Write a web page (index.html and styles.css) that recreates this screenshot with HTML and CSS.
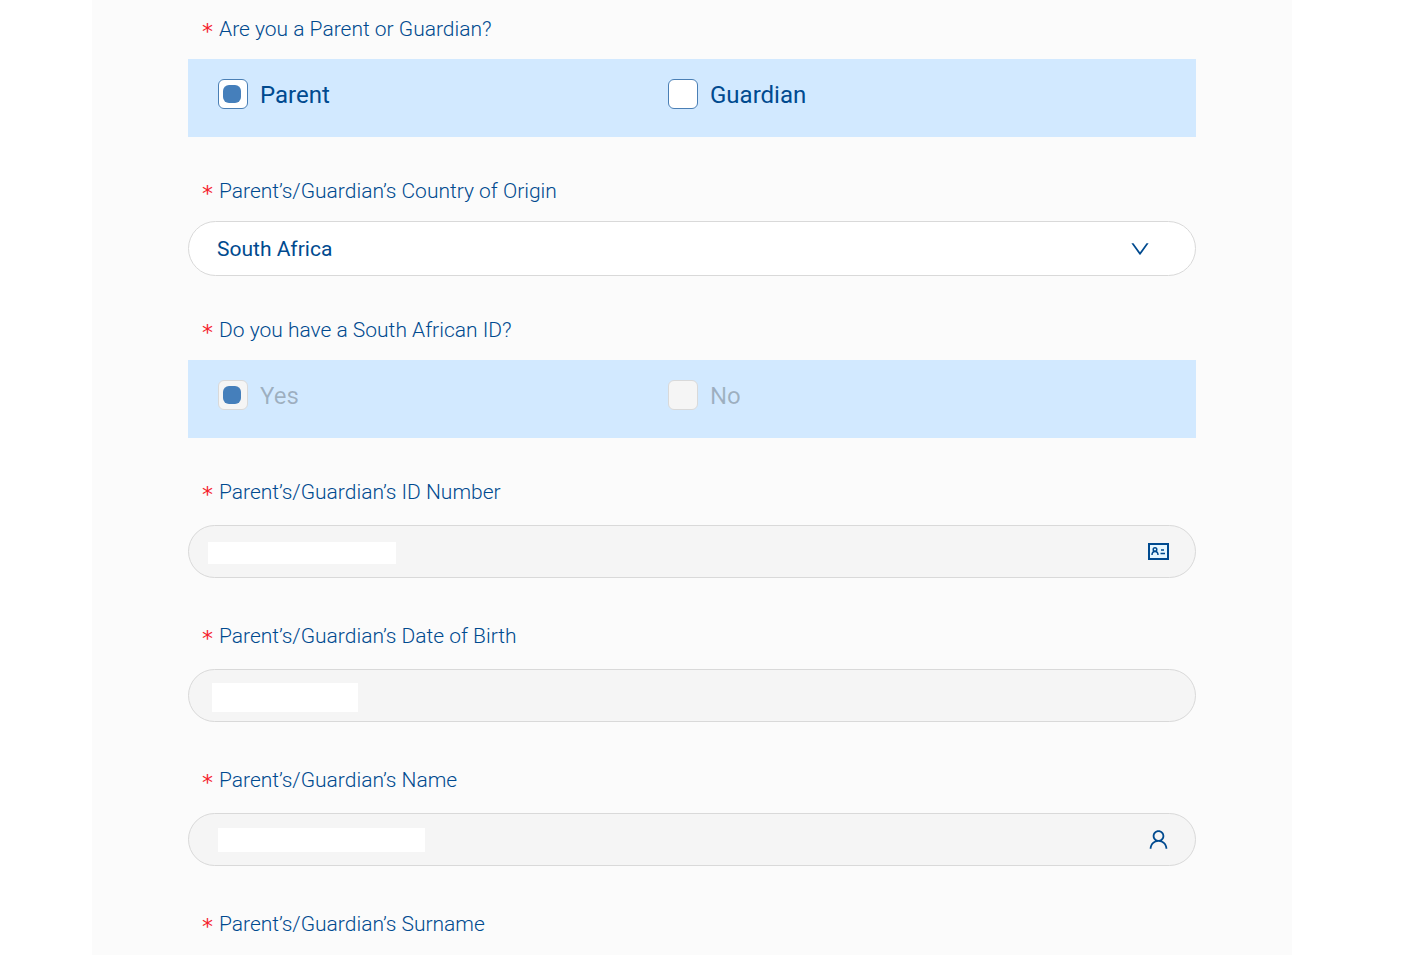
FILE: index.html
```html
<!DOCTYPE html>
<html lang="en">

<head>
    <meta charset="UTF-8">
    <meta name="viewport" content="width=device-width, initial-scale=1.0">
    <title>Parent / Guardian Details</title>
    <link rel="stylesheet" href="styles.css">
</head>

<body>
    <main class="page">
        <form class="form">
            <fieldset class="form-item">
                <legend class="form-label">Are you a Parent or Guardian?</legend>
                <div class="choices">
                    <label class="choice">
                        <input type="radio" name="relation" value="parent" checked>
                        <span>Parent</span>
                    </label>
                    <label class="choice">
                        <input type="radio" name="relation" value="guardian">
                        <span>Guardian</span>
                    </label>
                </div>
            </fieldset>

            <div class="form-item">
                <label class="form-label" for="country">Parent’s/Guardian’s Country of Origin</label>
                <div class="select-box">
                    <select id="country" name="country">
                        <option selected>South Africa</option>
                    </select>
                    <svg class="arrow" viewBox="64 64 896 896" aria-hidden="true">
                        <path d="M884 256h-75c-5.100 0-9.900 2.500-12.900 6.600L512 654.200 227.900 262.600c-3-4.100-7.800-6.600-12.900-6.600h-75c-6.500 0-10.300 7.400-6.500 12.700l352.600 486.100c12.800 17.600 39 17.600 51.700 0l352.600-486.100c3.900-5.300.1-12.700-6.400-12.700z" />
                    </svg>
                </div>
            </div>

            <fieldset class="form-item">
                <legend class="form-label">Do you have a South African ID?</legend>
                <div class="choices">
                    <label class="choice disabled">
                        <input type="radio" name="has-id" value="yes" checked disabled>
                        <span>Yes</span>
                    </label>
                    <label class="choice disabled">
                        <input type="radio" name="has-id" value="no" disabled>
                        <span>No</span>
                    </label>
                </div>
            </fieldset>

            <div class="form-item text-item">
                <label class="form-label" for="id-number">Parent’s/Guardian’s ID Number</label>
                <div class="text-box">
                    <input type="text" id="id-number" name="id-number" disabled>
                    <span class="mask mask-id"></span>
                    <svg class="icon" viewBox="0 0 21 21" aria-hidden="true">
                        <rect class="card" x="1" y="3" width="19" height="15" />
                        <circle class="line" cx="7" cy="8.5" r="1.8" />
                        <path class="line" d="M4 14c0-2.300 1.200-3.500 3-3.500s3 1.200 3 3.500M13 9h3M12.500 12.500h4.500" />
                    </svg>
                </div>
            </div>

            <div class="form-item text-item">
                <label class="form-label" for="birth-date">Parent’s/Guardian’s Date of Birth</label>
                <div class="text-box">
                    <input type="text" id="birth-date" name="birth-date" disabled>
                    <span class="mask mask-date"></span>
                </div>
            </div>

            <div class="form-item text-item">
                <label class="form-label" for="first-name">Parent’s/Guardian’s Name</label>
                <div class="text-box">
                    <input type="text" id="first-name" name="first-name" disabled>
                    <span class="mask mask-name"></span>
                    <svg class="icon" viewBox="64 64 896 896" aria-hidden="true">
                        <path d="M858.500 763.600a374 374 0 00-80.600-119.500 375.630 375.630 0 00-119.500-80.600c-.4-.2-.8-.3-1.200-.5C719.500 518 760 444.700 760 362c0-137-111-248-248-248S264 225 264 362c0 82.700 40.500 156 102.800 201.100-.4.2-.8.3-1.200.5-44.800 18.900-85 46-119.500 80.600a375.630 375.630 0 00-80.600 119.500A371.700 371.700 0 00136 901.800a8 8 0 008 8.200h60c4.400 0 7.900-3.500 8-7.800 2-77.200 33-149.500 87.800-204.300 56.700-56.700 132-87.900 212.200-87.900s155.500 31.200 212.200 87.900C779 752.700 810 825 812 902.200c.1 4.400 3.600 7.800 8 7.800h60a8 8 0 008-8.200c-1-47.800-10.900-94.300-29.500-138.200zM512 534c-45.900 0-89.100-17.900-121.600-50.400S340 407.900 340 362c0-45.900 17.900-89.100 50.400-121.600S466.100 190 512 190s89.100 17.900 121.600 50.400S684 316.100 684 362c0 45.900-17.900 89.100-50.400 121.600S557.900 534 512 534z" />
                    </svg>
                </div>
            </div>

            <div class="form-item text-item">
                <label class="form-label" for="surname">Parent’s/Guardian’s Surname</label>
                <div class="text-box">
                    <input type="text" id="surname" name="surname" disabled>
                </div>
            </div>
        </form>
    </main>
</body>

</html>
```
FILE: styles.css
```css
* {
    box-sizing: border-box;
}

html {
    scrollbar-width: none;
}

body {
    margin: 0;
    padding-right: 27px;
    background-color: #fff;
    color: #004a8f;
    font-family: Roboto, sans-serif;
    font-size: 21px;
}

.page {
    max-width: 1200px;
    margin: 0 auto;
    padding: 14px 96px 0;
    background-color: #fbfbfb;
}

.form-item {
    min-width: 0;
    margin: 0 0 39px;
    padding: 0;
    border: 0;
}

.text-item {
    margin-bottom: 43px;
}

.form-label {
    display: flex;
    align-items: center;
    gap: 6px;
    height: 30px;
    margin-bottom: 15px;
    padding: 0 0 0 14px;
    font-size: 21px;
    font-weight: 300;
    line-height: 30px;
}

.text-item .form-label {
    margin-bottom: 18px;
}

/* Required mark */
.form-label::before {
    content: "*";
    color: #f5222d;
    font-family: "DejaVu Sans", sans-serif;
    font-size: 22px;
    font-weight: 400;
    line-height: 22px;
    padding-top: 6px;
}

/* Radio panels */
.choices {
    display: grid;
    grid-template-columns: 1fr 1fr;
    height: 78px;
    padding: 20px 78px 0 30px;
    background-color: #d2e9ff;
}

.choice {
    display: flex;
    gap: 12px;
    font-size: 24px;
    line-height: 32px;
}

.choice input {
    appearance: none;
    width: 30px;
    height: 30px;
    margin: 0;
    padding: 5px 4px;
    border: 1px solid #4a7fb5;
    border-radius: 6px;
    background-color: #fff;
}

.choice input:checked::before {
    content: "";
    display: block;
    width: 18px;
    height: 18px;
    border-radius: 6px;
    background-color: #457fbb;
}

.choice.disabled {
    color: rgba(0, 0, 0, 0.25);
}

.choice.disabled input {
    border-color: #d9d9d9;
    background-color: #f5f5f5;
}

/* Rounded fields */
.select-box,
.text-box {
    position: relative;
    display: flex;
    align-items: center;
    border: 1px solid #d9d9d9;
    border-radius: 28px;
}

.select-box {
    height: 55px;
    background-color: #fff;
}

.select-box select {
    appearance: none;
    width: 100%;
    height: 100%;
    padding: 0 28px;
    border: 0;
    border-radius: 28px;
    background: none;
    color: inherit;
    font: inherit;
}

.arrow {
    position: absolute;
    right: 45px;
    width: 20px;
    height: 20px;
    fill: #004a8f;
    pointer-events: none;
}

.text-box {
    height: 53px;
    padding-right: 26px;
    background-color: #f5f5f5;
}

.text-box input {
    flex: 1;
    min-width: 0;
    height: 100%;
    padding: 0 28px;
    border: 0;
    background: none;
    color: inherit;
    font: inherit;
}

.icon {
    width: 21px;
    height: 21px;
    fill: #004a8f;
}

.icon .card {
    fill: #e6f7ff;
    stroke: #004a8f;
    stroke-width: 2;
}

.icon .line {
    fill: none;
    stroke: #004a8f;
    stroke-width: 1.5;
}

/* Blanked out values */
.mask {
    position: absolute;
    background-color: #fff;
}

.mask-id {
    top: 16px;
    left: 19px;
    width: 188px;
    height: 22px;
}

.mask-date {
    top: 13px;
    left: 23px;
    width: 146px;
    height: 29px;
}

.mask-name {
    top: 14px;
    left: 29px;
    width: 207px;
    height: 24px;
}
```
